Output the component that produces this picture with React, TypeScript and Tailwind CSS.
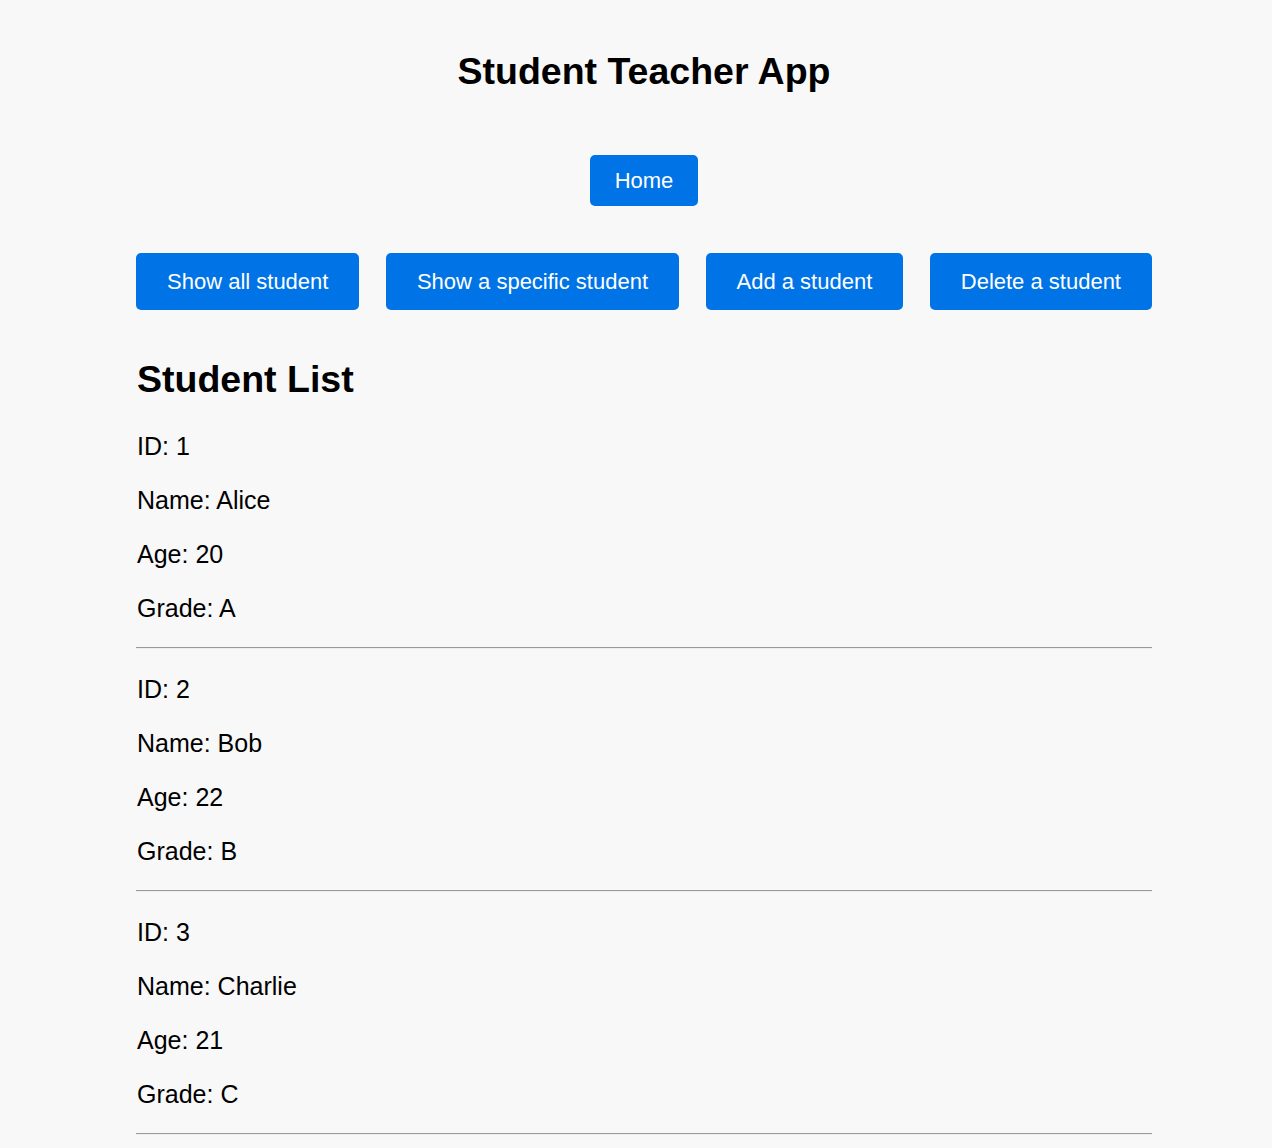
const students = [
  { id: 1, name: "Alice", age: 20, grade: "A" },
  { id: 2, name: "Bob", age: 22, grade: "B" },
  { id: 3, name: "Charlie", age: 21, grade: "C" },
];

const actions = [
  "Show all student",
  "Show a specific student",
  "Add a student",
  "Delete a student",
];

function App() {
  return (
    <div className="min-h-[1148px] w-full bg-[#f8f8f8] font-['Liberation_Sans',Arial,sans-serif] text-black">
      <div className="ml-[136px] w-[1016px] pt-[49px] pb-10">
        <h1 className="text-center text-[37.5px] font-bold leading-[44px]">
          Student Teacher App
        </h1>

        <div className="mt-[62px] flex justify-center">
          <button className="rounded-[5px] bg-[#0073e6] px-[25px] py-[13px] text-[22px] leading-[25px] text-white">
            Home
          </button>
        </div>

        <div className="mt-[47px] flex justify-between">
          {actions.map((label) => (
            <button
              key={label}
              className="rounded-[5px] bg-[#0073e6] px-[31px] py-[16px] text-[22px] leading-[25px] text-white"
            >
              {label}
            </button>
          ))}
        </div>

        <h2 className="mt-[47px] pl-px text-[37.5px] font-bold leading-[44px]">
          Student List
        </h2>

        <div className="mt-[31px]">
          {students.map((s) => (
            <div key={s.id}>
              <div className="flex flex-col gap-[26px] pl-px text-[25px] leading-[28px]">
                <p>ID: {s.id}</p>
                <p>Name: {s.name}</p>
                <p>Age: {s.age}</p>
                <p>Grade: {s.grade}</p>
              </div>
              <hr className="mt-[25px] mb-[26px] border-t border-b border-t-[#9a9a9a] border-b-[#eeeeee]" />
            </div>
          ))}
        </div>
      </div>
    </div>
  );
}

export default App;
